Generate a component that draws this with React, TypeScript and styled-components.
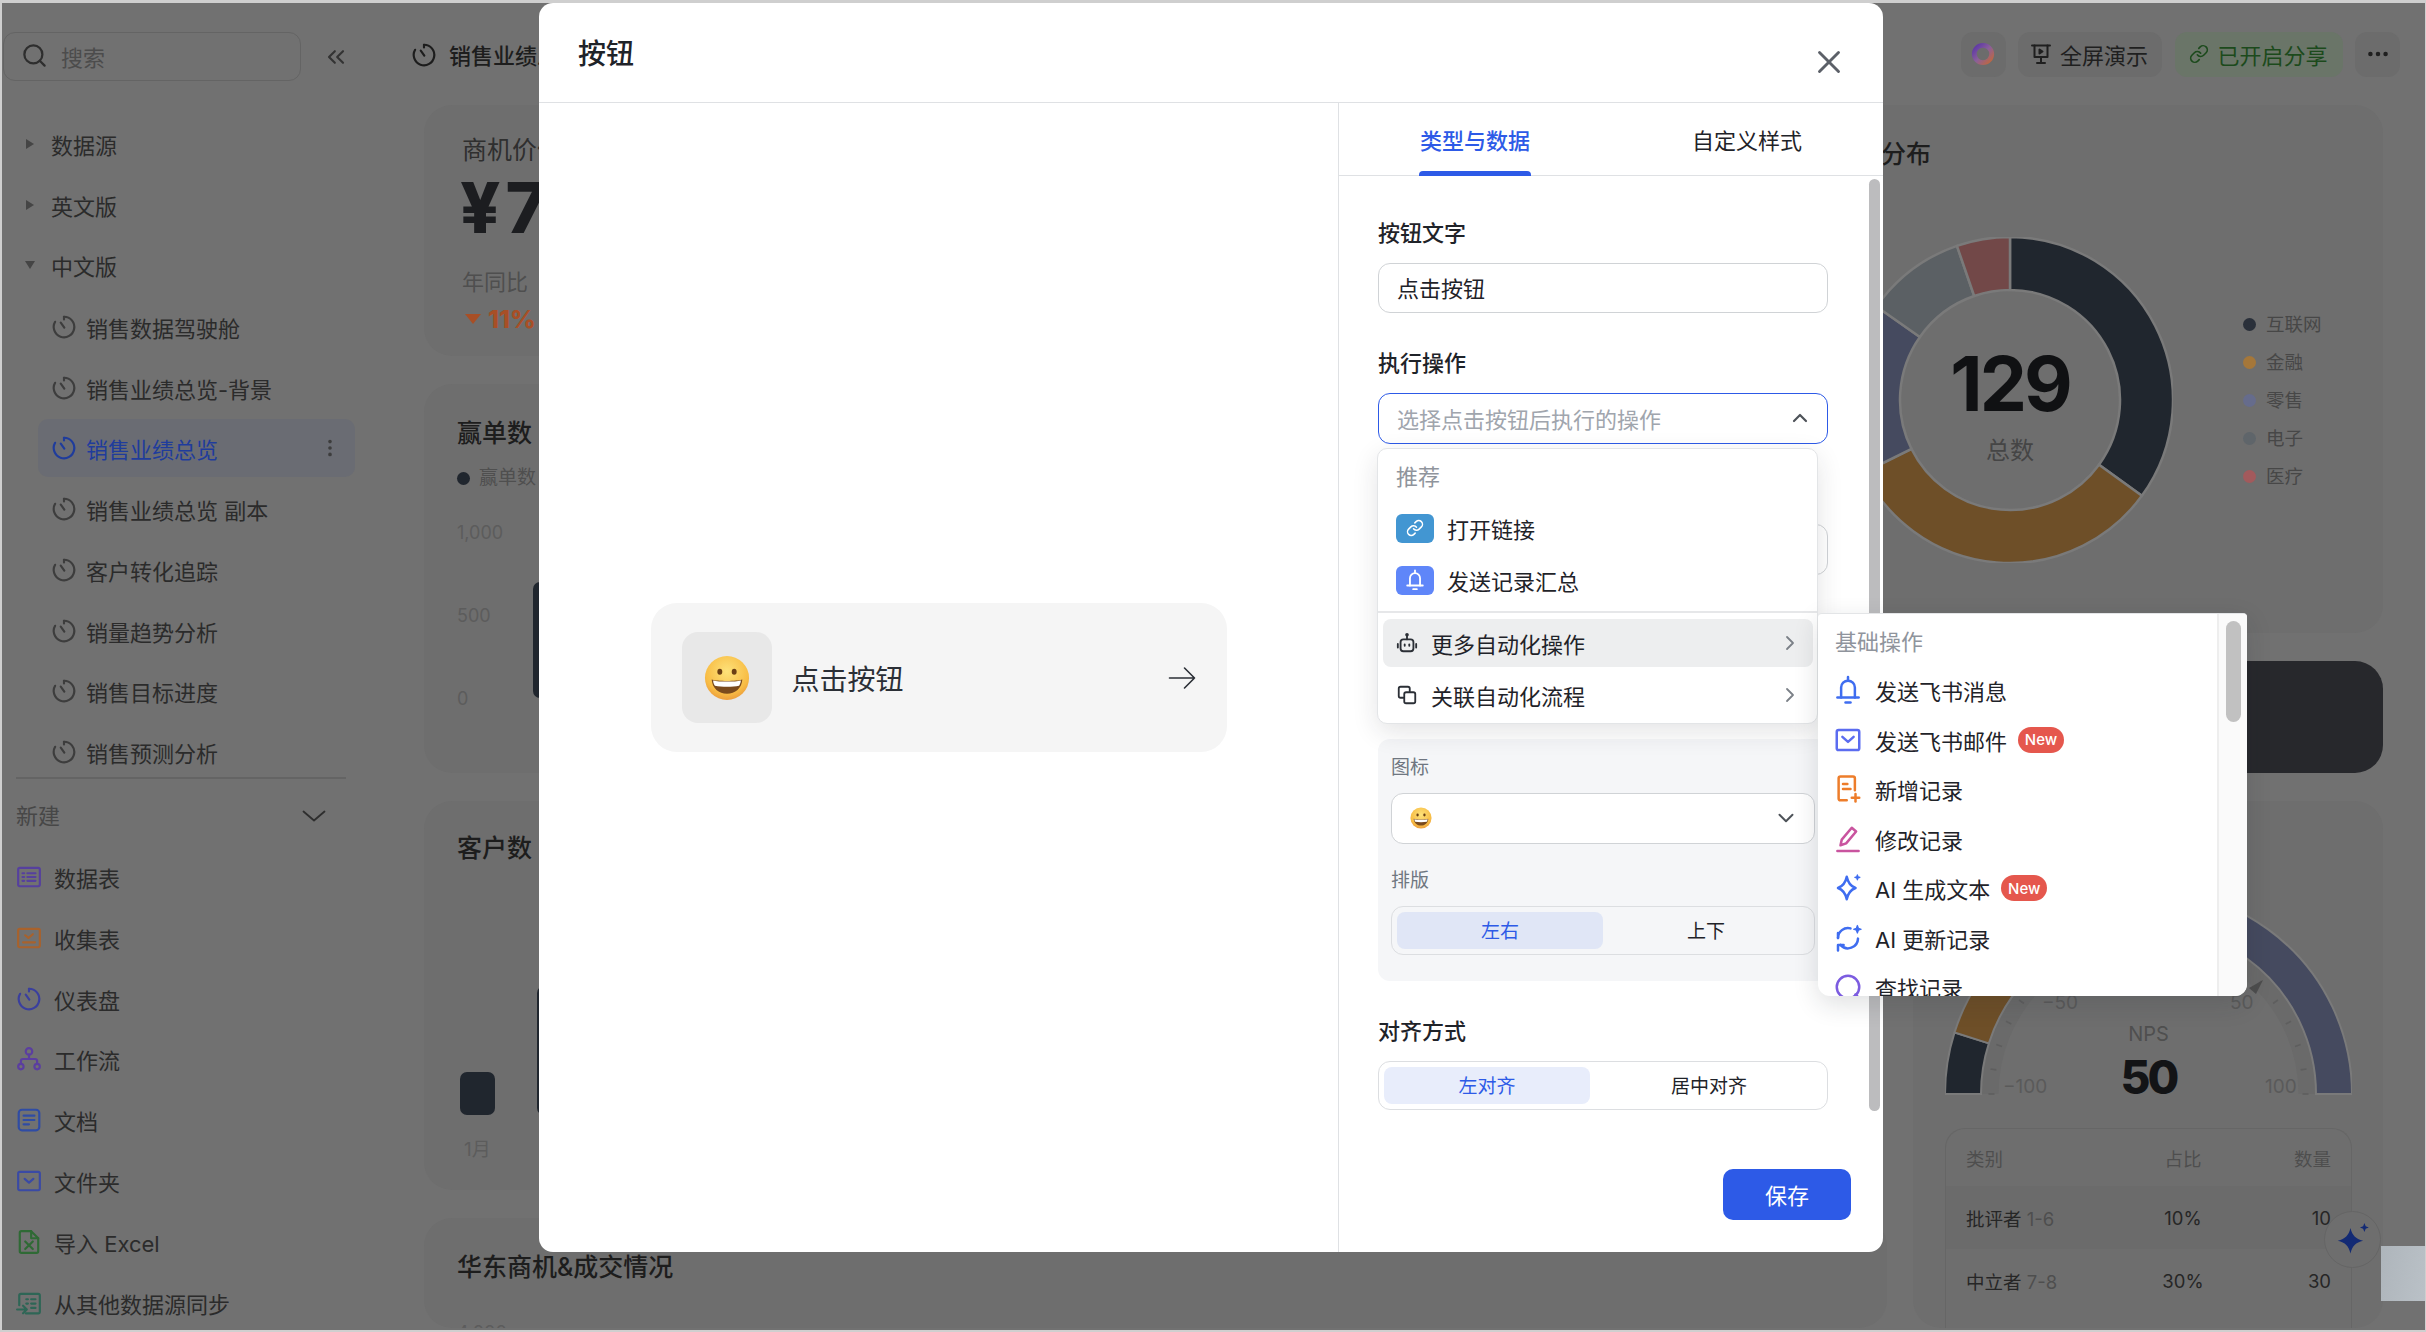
import React, {ReactElement, ReactNode} from "react";
import styled, {createGlobalStyle} from "styled-components";
import {ChevronDown, ChevronRight, ChevronsLeft, ChevronUp, Link, MoreHorizontal, MoreVertical, Search, X} from "lucide-react";

const GlobalStyle = createGlobalStyle`
  html, body {
    margin: 0;
    padding: 0;
    background: #cfcfcf;
  }

  * {
    box-sizing: border-box;
  }

  body {
    font-family: Inter, "Noto Sans CJK SC", "Liberation Sans", sans-serif;
    color: #1f2329;
  }
`;

const BLUE = "#2d5ae7";

/* ---------- page behind the dialog ---------- */

const Frame = styled.div`
  position: relative;
  width: 2426px;
  height: 1332px;
  overflow: hidden;
  display: grid;
  grid-template-columns: 409px 1fr;
  background: #717171;
  border: solid #cfcfcf;
  border-width: 3px 1px 2px 2px;
`;

const Sidebar = styled.aside`
  display: flex;
  flex-direction: column;
  height: 1327px;
  overflow: hidden;
  padding-top: 29px;
`;

const SearchRow = styled.div`
  display: flex;
  align-items: center;
  padding-left: 1px;
  gap: 21px;
  color: #333333;
  flex: none;
`;

const SearchBox = styled.div`
  display: flex;
  align-items: center;
  gap: 13px;
  width: 298px;
  height: 49px;
  padding: 0 0 2px 17px;
  border: 1px solid #646464;
  border-radius: 12px;
  font-size: 22px;
  color: #4c4c4c;

  svg {
    color: #2e2e2e;
  }
`;

const TreeClip = styled.div`
  margin-top: 14px;
  height: 682px;
  overflow: hidden;
  flex: none;
`;

const Tree = styled.div`
  display: flex;
  flex-direction: column;
  margin-top: -41px;
`;

const RootRow = styled.div`
  display: flex;
  align-items: center;
  height: 58px;
  margin: 1.35px 0;
  padding: 0 0 2px 22px;
  font-size: 22px;
  color: #2b2b2b;
`;

const ClippedRootRow = styled(RootRow)`
  margin: -1.65px 0 4.35px;
`;

const CaretBox = styled.span`
  display: flex;
  width: 27px;
`;

const ChildRow = styled.div<{ $active?: boolean }>`
  display: flex;
  align-items: center;
  gap: 9px;
  width: 317px;
  height: 58px;
  margin: 1.35px 0 1.35px 36px;
  padding: 0 14px 0 13px;
  border-radius: 10px;
  font-size: 22px;
  color: ${p => p.$active ? "#1f3c9c" : "#2b2b2b"};
  background: ${p => p.$active ? "#6a6c73" : "transparent"};

  svg:last-child:not(:first-child) {
    margin-left: auto;
    color: #3d3d3d;
  }
`;

const SideDivider = styled.div`
  flex: none;
  width: 330px;
  height: 2px;
  margin-left: 14px;
  background: #646464;
`;

const NewHeader = styled.div`
  display: flex;
  align-items: center;
  justify-content: space-between;
  flex: none;
  width: 324px;
  height: 67.6px;
  padding: 5px 0 2px 14px;
  font-size: 22px;
  color: #474747;

  svg {
    margin-top: 3px;
  }
`;

const NewRow = styled.div`
  display: flex;
  align-items: center;
  flex: none;
  gap: 12px;
  height: 60.8px;
  padding-left: 14px;
  font-size: 22px;
  color: #2b2b2b;
`;

const Main = styled.main`
  display: flex;
  flex-direction: column;
  padding-top: 29px;
  min-width: 0;
`;

const TopBar = styled.header`
  display: flex;
  align-items: center;
  height: 45px;
  gap: 12px;
  padding-right: 25px;
  color: #1d1d1d;
`;

const PageTitle = styled.h1`
  margin: 0 0 2px;
  font-size: 22px;
  font-weight: 500;
`;

const TopActions = styled.div`
  display: flex;
  gap: 12.5px;
  margin-left: auto;
`;

const TopButton = styled.div<{ $green?: boolean; $width: number; $gap?: number; $inset?: number }>`
  display: flex;
  align-items: center;
  justify-content: ${p => p.$inset ? "flex-start" : "center"};
  gap: ${p => p.$gap || 0}px;
  width: ${p => p.$width}px;
  height: 45px;
  padding: 0 0 2px ${p => p.$inset || 0}px;
  border-radius: 12px;
  font-size: 22px;
  background: ${p => p.$green ? "#6a7568" : "#6c6c6c"};
  color: ${p => p.$green ? "#1c4a1c" : "#1f1f1f"};
`;

const Board = styled.div`
  display: grid;
  grid-template-columns: 1298px 139px 470px;
  grid-template-rows: 251px 249px 112px 389px 110px;
  gap: 28px 26px;
  margin: 28px 0 0 13px;
`;

const Card = styled.section<{ $column: string; $row: string }>`
  grid-column: ${p => p.$column};
  grid-row: ${p => p.$row};
  display: flex;
  flex-direction: column;
  overflow: hidden;
  border-radius: 28px;
  padding: 30px 33px 0;
  background: #6e6e6e;
`;

const CardTitle = styled.h2<{ $drop?: number }>`
  margin: ${p => p.$drop || 0}px 0 0;
  font-size: 25px;
  line-height: 34px;
  font-weight: 500;
  color: #1d1d1d;
  white-space: nowrap;
`;

const KpiLabel = styled.div`
  padding-left: 5px;
  font-size: 25px;
  line-height: 30px;
  color: #2f2f2f;
`;

const KpiValue = styled.div`
  margin-top: 7px;
  padding-left: 3px;
  font-size: 70px;
  line-height: 72px;
  font-weight: 800;
  letter-spacing: 5px;
  color: #1c1d20;
  white-space: nowrap;
`;

const KpiNote = styled.div`
  margin-top: 23px;
  padding-left: 5px;
  font-size: 22px;
  line-height: 30px;
  color: #4f4f4f;
`;

const KpiTrend = styled.div`
  display: flex;
  align-items: center;
  gap: 7px;
  margin-top: 7px;
  padding-left: 8px;
  font-size: 25px;
  line-height: 30px;
  font-weight: 800;
  color: #a84f26;
`;

const DownMark = styled.span`
  width: 0;
  height: 0;
  border: solid transparent;
  border-width: 10px 8px 0;
  border-top-color: #a84f26;
`;

const SeriesLegend = styled.div`
  display: flex;
  align-items: center;
  gap: 9px;
  margin-top: 15px;
  font-size: 19px;
  line-height: 26px;
  color: #4f4f4f;
`;

const Dot = styled.span<{ $color: string }>`
  flex: none;
  width: 13px;
  height: 13px;
  border-radius: 50%;
  background: ${p => p.$color};
`;

const WinChart = styled.div`
  display: flex;
  height: 190px;
  margin-top: 30px;
`;

const YAxis = styled.div`
  display: flex;
  flex-direction: column;
  justify-content: space-between;
  width: 76px;
  font-size: 18px;
  line-height: 24px;
  color: #5c5c5c;
`;

const Bar = styled.div<{ $height: number; $width: number }>`
  flex: none;
  width: ${p => p.$width}px;
  height: ${p => p.$height}px;
  border-radius: 7px;
  background: #20262e;
`;

const WinBar = styled(Bar)`
  align-self: flex-end;
  margin-bottom: 13px;
`;

const CustomerBars = styled.div`
  display: flex;
  align-items: flex-end;
  gap: 42px;
  height: 250px;
  padding-left: 3px;
`;

const MonthLabel = styled.div`
  margin-top: 23px;
  padding-left: 7px;
  font-size: 19px;
  line-height: 24px;
  color: #5c5c5c;
`;

const ClippedAxis = styled.div`
  margin-top: 37px;
  font-size: 18px;
  line-height: 24px;
  color: #5c5c5c;
`;

const PieCard = styled(Card)`
  padding-top: 32px;
`;

const PieBody = styled.div`
  display: flex;
  align-items: center;
  gap: 70px;
  margin: 66px 0 0 66px;
`;

const PieCenter = styled.div`
  position: relative;
  flex: none;
  width: 326px;
  height: 326px;
`;

const PieCaption = styled.div`
  position: absolute;
  inset: 0;
  display: flex;
  flex-direction: column;
  align-items: center;
  padding-top: 105px;
`;

const PieTotal = styled.div`
  font-size: 75px;
  line-height: 84px;
  font-weight: 700;
  letter-spacing: -3px;
  color: #101113;
`;

const PieTotalLabel = styled.div`
  margin-top: 8px;
  font-size: 24px;
  line-height: 34px;
  color: #454545;
`;

const PieLegend = styled.div`
  display: flex;
  flex-direction: column;
  gap: 12px;
`;

const PieLegendItem = styled.div`
  display: flex;
  align-items: center;
  gap: 10px;
  font-size: 18.5px;
  line-height: 26px;
  color: #474747;
`;

const DarkBanner = styled.div`
  grid-column: 2 / 4;
  grid-row: 3;
  border-radius: 28px;
  background: #27282c;
`;

const NpsCard = styled(Card)`
  padding: 89px 31px 0 32px;
  flex-shrink: 0;
`;

const NpsTable = styled.div`
  flex: 1;
  margin-top: 33px;
  border: 1px solid #666666;
  border-bottom: 0;
  border-radius: 20px 20px 0 0;
  overflow: hidden;
`;

const NpsRow = styled.div<{ $head?: boolean; $shade?: boolean }>`
  display: grid;
  grid-template-columns: 167px 100px 98px;
  align-items: center;
  height: ${p => p.$head ? "57px" : "63px"};
  padding: 0 20px;
  font-size: 18.5px;
  color: ${p => p.$head ? "#4e4e4e" : "#262626"};
  background: ${p => p.$shade ? "#6b6b6b" : "transparent"};

  span:nth-child(2) {
    text-align: center;
  }

  span:nth-child(3) {
    text-align: right;
  }

  em {
    font-style: normal;
    color: #4e4e4e;
  }
`;

const Fab = styled.div`
  position: absolute;
  right: 44px;
  bottom: 62px;
  z-index: 1;
  display: flex;
  align-items: center;
  justify-content: center;
  width: 57px;
  height: 57px;
  border-radius: 50%;
  border: 1px solid #656565;
  background: #6e6e6e;
`;

const CornerPatch = styled.div`
  position: absolute;
  right: 0;
  bottom: 29px;
  width: 44px;
  height: 55px;
  background: linear-gradient(100deg, #aeb5bb, #bac1c7);
`;

/* ---------- dialog ---------- */

const Dialog = styled.div`
  position: absolute;
  top: 0;
  left: 537px;
  z-index: 2;
  width: 1344px;
  height: 1249px;
  display: grid;
  grid-template-rows: 100px 1fr;
  background: #ffffff;
  border-radius: 14px;
`;

const DialogHead = styled.div`
  display: flex;
  align-items: center;
  justify-content: space-between;
  padding: 0 39px;
  border-bottom: 1px solid #dfe1e4;
  color: #5c6068;
`;

const DialogTitle = styled.div`
  margin-top: -2px;
  font-size: 28px;
  font-weight: 500;
  color: #1f2329;
`;

const CloseButton = styled.span`
  display: flex;
  margin: 18px -4px 0 0;
`;

const DialogBody = styled.div`
  display: grid;
  grid-template-columns: 799px 1fr;
  min-height: 0;
`;

const Preview = styled.div`
  display: flex;
  align-items: center;
  justify-content: center;
`;

const DemoButton = styled.div`
  display: flex;
  align-items: center;
  width: 576px;
  height: 149px;
  padding: 0 31px 0 31px;
  border-radius: 26px;
  background: #f5f5f5;
  font-size: 28px;
  color: #2b2f36;
`;

const EmojiTile = styled.div`
  display: flex;
  align-items: center;
  justify-content: center;
  width: 90px;
  height: 91px;
  margin-right: 20px;
  border-radius: 16px;
  background: #e8e8e8;
`;

const DemoArrow = styled.svg`
  flex: none;
  margin-left: auto;
`;

const SidePanel = styled.div`
  display: flex;
  flex-direction: column;
  position: relative;
  min-height: 0;
  border-left: 1px solid #dfe1e4;
`;

const Tabs = styled.div`
  display: grid;
  grid-template-columns: 1fr 1fr;
  height: 73px;
  border-bottom: 1px solid #dfe1e4;
`;

const Tab = styled.div`
  display: flex;
  justify-content: center;
`;

const TabLabel = styled.div<{ $active?: boolean }>`
  position: relative;
  display: flex;
  align-items: center;
  height: 73px;
  padding: 0 1px 2px;
  font-size: 22px;
  font-weight: ${p => p.$active ? 500 : 400};
  color: ${p => p.$active ? BLUE : "#1f2329"};

  &::after {
    content: "";
    position: absolute;
    left: 0;
    right: 0;
    bottom: 0;
    height: 5px;
    border-radius: 4px 4px 0 0;
    background: ${p => p.$active ? BLUE : "transparent"};
  }
`;

const FormArea = styled.div`
  position: relative;
  flex: 1;
  display: flex;
  flex-direction: column;
  width: 489px;
  padding: 42px 0 0 39px;
  min-height: 0;
`;

const Scrollbar = styled.div`
  position: absolute;
  top: 76px;
  right: 3px;
  width: 11px;
  height: 932px;
  border-radius: 6px;
  background: #bcbcbe;
`;

const FieldLabel = styled.div<{ $gap?: number }>`
  margin-top: ${p => p.$gap || 0}px;
  margin-bottom: 15px;
  font-size: 22px;
  line-height: 30px;
  font-weight: 500;
  color: #1f2329;
`;

const TextBox = styled.div<{ $focus?: boolean; $height?: number }>`
  display: flex;
  align-items: center;
  justify-content: space-between;
  flex: none;
  height: ${p => p.$height || 50}px;
  padding: 0 15px 2px 18px;
  border: 1px solid ${p => p.$focus ? BLUE : "#d0d3d6"};
  border-radius: 12px;
  background: #ffffff;
  font-size: 22px;
  color: ${p => p.$focus ? "#a0a5ad" : "#1f2329"};

  svg {
    color: #4e5359;
  }
`;

const SelectAnchor = styled.div`
  position: relative;
  z-index: 2;
`;

const HiddenField = styled(TextBox)`
  margin-top: 80px;
`;

const SubSettings = styled.div`
  flex: none;
  height: 242px;
  margin-top: 164px;
  padding: 15px 13px 0;
  border-radius: 12px;
  background: #f5f6f8;
`;

const SubLabel = styled.div<{ $gap?: number }>`
  margin-top: ${p => p.$gap || 0}px;
  margin-bottom: 11px;
  font-size: 19px;
  line-height: 28px;
  color: #6f7680;
`;

const Segments = styled.div<{ $columns?: string }>`
  display: grid;
  grid-template-columns: ${p => p.$columns || "1fr 1fr"};
  height: 49px;
  padding: 5px;
  border: 1px solid #dcdee1;
  border-radius: 12px;
`;

const Segment = styled.div<{ $active?: boolean; $tint?: string; $shift?: number }>`
  display: flex;
  align-items: center;
  justify-content: center;
  padding: 0 0 2px ${p => p.$shift || 0}px;
  border-radius: 8px;
  font-size: 19px;
  color: ${p => p.$active ? BLUE : "#1f2329"};
  background: ${p => p.$active ? (p.$tint || "#e8edfb") : "transparent"};
`;

const PanelFooter = styled.div`
  flex: none;
  display: flex;
  justify-content: flex-end;
  height: 112px;
  padding: 29px 32px 0 0;
`;

const SaveButton = styled.div`
  display: flex;
  align-items: center;
  justify-content: center;
  width: 128px;
  height: 51px;
  padding-bottom: 2px;
  border-radius: 10px;
  background: ${BLUE};
  color: #ffffff;
  font-size: 22px;
`;

const Dropdown = styled.div`
  position: absolute;
  top: 55px;
  left: -1px;
  width: 441px;
  height: 276px;
  background: #ffffff;
  border: 1px solid #e3e5e7;
  border-radius: 10px;
  box-shadow: 0 8px 26px rgba(31, 35, 41, .12);
  font-size: 22px;
`;

const Recommended = styled.div`
  height: 164px;
  padding: 13px 0 0 18px;
  border-bottom: 2px solid #e6e7e9;
`;

const MenuHeading = styled.div<{ $gap: number }>`
  margin-bottom: ${p => p.$gap}px;
  font-size: 22px;
  line-height: 30px;
  color: #8f949c;
`;

const QuickRow = styled.div`
  display: flex;
  align-items: center;
  gap: 13px;
  height: 52px;
  color: #1f2329;
`;

const QuickIcon = styled.span<{ $color: string }>`
  display: flex;
  align-items: center;
  justify-content: center;
  width: 38px;
  height: 29px;
  border-radius: 6px;
  background: ${p => p.$color};
  color: #ffffff;
`;

const MoreList = styled.div`
  display: flex;
  flex-direction: column;
  gap: 4px;
  padding: 6px 4px 0 5px;
`;

const MoreRow = styled.div<{ $active?: boolean }>`
  display: flex;
  align-items: center;
  gap: 13px;
  height: 48px;
  padding: 0 11px 0 13px;
  border-radius: 8px;
  color: #1f2329;
  background: ${p => p.$active ? "#edeeef" : "transparent"};

  svg:last-child {
    margin-left: auto;
    color: #7b8087;
  }
`;

const SubMenu = styled.div`
  position: absolute;
  top: 164px;
  left: 440px;
  width: 429px;
  height: 383px;
  display: flex;
  overflow: hidden;
  background: #ffffff;
  border-radius: 4px 4px 12px 12px;
  box-shadow: 0 8px 26px rgba(31, 35, 41, .14);
  border-top: 1px solid #e3e5e7;
`;

const SubList = styled.div`
  flex: 1;
  overflow: hidden;
  padding: 13px 0 0 17px;
`;

const SubRow = styled.div`
  display: flex;
  align-items: center;
  height: 49.5px;
  color: #1f2329;
`;

const SubIcon = styled.span`
  display: flex;
  width: 40px;

  svg {
    margin-left: -2px;
  }
`;

const NewBadge = styled.span`
  display: flex;
  align-items: center;
  justify-content: center;
  width: 46px;
  height: 26px;
  margin-left: 11px;
  border-radius: 13px;
  background: #e5574d;
  color: #ffffff;
  font-size: 15px;
  font-weight: 500;
`;

const SubGutter = styled.div`
  flex: none;
  width: 30px;
  padding: 7px 6px 0 7px;
  background: #fafafa;
  border-left: 2px solid #eeeeee;
`;

const SubThumb = styled.div`
  height: 101px;
  border-radius: 8px;
  background: #c1c1c1;
`;

/* ---------- drawings ---------- */

function Svg({size, color, children}: { size: number, color: string, children: ReactNode }): ReactElement {
    return (
        <svg width={size} height={size} viewBox="0 0 24 24" fill="none" stroke={color} strokeWidth={2}
             strokeLinecap="round" strokeLinejoin="round" style={{flex: "none"}}>
            {children}
        </svg>
    );
}

function DashIcon({size = 26, color = "#3d3d3d"}: { size?: number, color?: string }) {
    return (
        <Svg size={size} color={color}>
            <path d="M12 2.5a9.5 9.5 0 1 1-8.2 4.7"/>
            <path d="M12 2.5v2.5"/>
            <path d="M12.3 12.5 9 8"/>
        </Svg>
    );
}

function BellIcon({size, color}: { size: number, color: string }) {
    return (
        <Svg size={size} color={color}>
            <path d="M12 1.5v2"/>
            <path d="M6.5 18v-8a5.5 5.5 0 0 1 11 0v8"/>
            <path d="M3.5 18h17"/>
            <path d="M10 22h4"/>
        </Svg>
    );
}

function BotIcon() {
    return (
        <Svg size={22} color="#2b2f36">
            <rect x="5" y="8" width="14" height="13" rx="3"/>
            <path d="M12 4v4"/>
            <path d="M2 13v4"/>
            <path d="M22 13v4"/>
            <circle cx="12" cy="3" r="1"/>
            <path d="M9.5 13.5v1.5"/>
            <path d="M14.5 13.5v1.5"/>
        </Svg>
    );
}

function FlowLinkIcon() {
    return (
        <Svg size={22} color="#2b2f36">
            <path d="M15 8V5a2 2 0 0 0-2-2H5a2 2 0 0 0-2 2v8a2 2 0 0 0 2 2h3"/>
            <rect x="9" y="9" width="12" height="12" rx="2"/>
        </Svg>
    );
}

function MailIcon() {
    return (
        <Svg size={30} color="#5b6cf0">
            <rect x="3" y="4" width="18" height="16" rx="1.5"/>
            <path d="M7.5 9.5 12 13.5l4.5-4"/>
        </Svg>
    );
}

function AddRecordIcon() {
    return (
        <Svg size={30} color="#ed7d2b">
            <path d="M11 21H6a1.5 1.500 0 0 1-1.500-1.500v-16A1.500 1.500 0 0 1 6 2h10a1.500 1.500 0 0 1 1.500 1.500V13"/>
            <path d="M8 8h3.500"/>
            <path d="M8 12h6"/>
            <path d="M18 16v6"/>
            <path d="M15 19h6"/>
        </Svg>
    );
}

function EditRecordIcon() {
    return (
        <Svg size={30} color="#c9549f">
            <path d="m6 17 1-4.500 8-9.500 3.500 3-8 9.500z"/>
            <path d="M3.500 21.500h17"/>
        </Svg>
    );
}

function AiTextIcon() {
    return (
        <Svg size={30} color="#3f6df0">
            <path d="M11 3c1 5 3 7.500 7 9-4 1.500-6 4-7 9-1-5-3-7.500-7-9 4-1.500 6-4 7-9z"/>
            <path d="m19.500 1.500.5 1.500 1.500.5-1.500.5-.5 1.500-.5-1.500-1.500-.5 1.500-.5z" fill="#3f6df0" strokeWidth={1}/>
        </Svg>
    );
}

function AiUpdateIcon() {
    return (
        <Svg size={30} color="#3f6df0">
            <path d="M4 12a8 8 0 0 1 10-7.700"/>
            <path d="M20 12.500a8 8 0 0 1-14 5"/>
            <path d="M4 22v-4.500h4.500"/>
            <path d="M4 12V8"/>
            <path d="m19.500 2 .8 2.200 2.200.8-2.200.8-.8 2.200-.8-2.200-2.200-.8 2.200-.8z" fill="#3f6df0" strokeWidth={1}/>
        </Svg>
    );
}

function FindIcon() {
    return (
        <Svg size={30} color="#7c5ce0">
            <circle cx="12" cy="12" r="9"/>
            <path d="m18 18 3 3"/>
        </Svg>
    );
}

function SheetIcon() {
    return (
        <Svg size={26} color="#56409e">
            <rect x="2" y="3.500" width="20" height="17" rx="1.500"/>
            <path d="M6 8.500h1.500M6 12h1.500M6 15.500h1.500M10.500 8.500H18M10.500 12H18M10.500 15.500H18"/>
        </Svg>
    );
}

function FormIcon() {
    return (
        <Svg size={26} color="#a8622c">
            <rect x="2" y="3.500" width="20" height="17" rx="1.500"/>
            <path d="m8.500 9.500 3 2.500 4-3.500"/>
            <path d="M6.500 16h11"/>
        </Svg>
    );
}

function FlowIcon() {
    return (
        <Svg size={26} color="#5b3ea0">
            <circle cx="12" cy="5" r="3"/>
            <circle cx="4.500" cy="19" r="2.500"/>
            <circle cx="19.500" cy="19" r="2.500"/>
            <path d="M12 8v4M4.500 16.500V14a2 2 0 0 1 2-2h11a2 2 0 0 1 2 2v2.500"/>
        </Svg>
    );
}

function DocIcon() {
    return (
        <Svg size={26} color="#2f4ca5">
            <rect x="2.500" y="2.500" width="19" height="19" rx="3"/>
            <path d="M7 8h10M7 12h10M7 16h5"/>
        </Svg>
    );
}

function FolderIcon() {
    return (
        <Svg size={26} color="#3a4aa5">
            <rect x="2" y="3.500" width="20" height="17" rx="1.500"/>
            <path d="m8 10 4 3.500 4-3.500"/>
        </Svg>
    );
}

function ExcelIcon() {
    return (
        <Svg size={26} color="#2f6a35">
            <path d="M14 2H5a1.500 1.500 0 0 0-1.500 1.500v17A1.500 1.500 0 0 0 5 22h14a1.500 1.500 0 0 0 1.500-1.500V8.500z"/>
            <path d="M14 2v6.500h6.500"/>
            <path d="m8.500 11.500 7 7M15.500 11.500l-7 7"/>
        </Svg>
    );
}

function SyncIcon() {
    return (
        <Svg size={26} color="#2e6656">
            <path d="M3 14V5a1.500 1.500 0 0 1 1.500-1.500h16A1.500 1.500 0 0 1 22 5v15a1.500 1.500 0 0 1-1.500 1.500H9"/>
            <path d="M9.500 8.500h1.500M9.500 12.500h1.500M14 8.500h4M14 12.500h4M14 16.500h4"/>
            <path d="M1 18h9M6.500 14.500 10 18l-3.500 3.500"/>
        </Svg>
    );
}

function ScreenIcon() {
    return (
        <Svg size={24} color="#1f1f1f">
            <path d="M3 3.500h18"/>
            <path d="M5.500 3.500V15h13V3.500"/>
            <path d="M12 15v6"/>
            <path d="M8 21h8"/>
            <path d="M10.500 7.500v4l3-2z" fill="#1f1f1f"/>
        </Svg>
    );
}

function RingLogo() {
    return (
        <svg width="26" height="26" viewBox="0 0 24 24" style={{flex: "none"}}>
            <defs>
                <linearGradient id="ring" x1="0" y1="0" x2="1" y2="1">
                    <stop offset="0" stopColor="#5a34a8"/>
                    <stop offset=".5" stopColor="#8a5f9a"/>
                    <stop offset="1" stopColor="#c2683a"/>
                </linearGradient>
            </defs>
            <circle cx="12" cy="12" r="8" fill="none" stroke="url(#ring)" strokeWidth={4.5}/>
        </svg>
    );
}

function WideChevron() {
    return (
        <svg width="24" height="12" viewBox="0 0 24 12" fill="none" stroke="#2e2e2e" strokeWidth={1.8} strokeLinecap="round" strokeLinejoin="round" style={{flex: "none"}}>
            <path d="m1.500 1.500 10.500 9 10.500-9"/>
        </svg>
    );
}

function GrinEmoji({size}: { size: number }) {
    return (
        <svg width={size} height={size} viewBox="0 0 48 48" style={{flex: "none"}}>
            <defs>
                <radialGradient id="face" cx=".5" cy=".35" r=".7">
                    <stop offset="0" stopColor="#fde27a"/>
                    <stop offset=".7" stopColor="#f8bd45"/>
                    <stop offset="1" stopColor="#e8943a"/>
                </radialGradient>
            </defs>
            <circle cx="24" cy="24" r="23" fill="url(#face)"/>
            <ellipse cx="16.500" cy="17.500" rx="2.600" ry="3.200" fill="#6b3f14"/>
            <ellipse cx="31.500" cy="17.500" rx="2.600" ry="3.200" fill="#6b3f14"/>
            <path d="M8 25.500c5 2 27 2 32 0-.5 9-7.500 15-16 15S8.500 34.500 8 25.500z" fill="#7a4a1d"/>
            <path d="M9.500 26.500c6 1.700 23 1.700 29 0-.3 2.500-1 4.300-1.900 5.500-7 1.400-18 1.400-25.200 0-1-1.200-1.700-3-1.900-5.500z" fill="#ffffff"/>
        </svg>
    );
}

function Sparkle() {
    return (
        <svg width="38" height="33" viewBox="0 0 30 26" style={{flex: "none"}}>
            <path d="M13 4c1.500 6 4 8.500 10 10-6 1.500-8.500 4-10 10-1.500-6-4-8.500-10-10 6-1.500 8.500-4 10-10z" fill="#132a74"/>
            <path d="m24 0 1 2.500 2.500 1-2.500 1-1 2.500-1-2.500-2.500-1 2.500-1z" fill="#132a74"/>
        </svg>
    );
}

function ringSlice(cx: number, cy: number, inner: number, outer: number, from: number, to: number): string {
    const point = (r: number, deg: number) => {
        const rad = deg * Math.PI / 180;
        return `${(cx + r * Math.sin(rad)).toFixed(2)} ${(cy - r * Math.cos(rad)).toFixed(2)}`;
    };
    const large = to - from > 180 ? 1 : 0;
    return `M${point(outer, from)}A${outer} ${outer} 0 ${large} 1 ${point(outer, to)}L${point(inner, to)}A${inner} ${inner} 0 ${large} 0 ${point(inner, from)}Z`;
}

const pieSlices = [
    {from: 0, to: 126, color: "#20262e", legend: "#2a303a", name: "互联网"},
    {from: 126, to: 243.6, color: "#6e4f28", legend: "#a5773a", name: "金融"},
    {from: 243.6, to: 305, color: "#454a5f", legend: "#666c8c", name: "零售"},
    {from: 305, to: 341, color: "#5b6064", legend: "#5f656a", name: "电子"},
    {from: 341, to: 360, color: "#724848", legend: "#a35a5c", name: "医疗"},
];

function Donut() {
    return (
        <svg width="326" height="326" viewBox="0 0 326 326">
            {pieSlices.map(s => (
                <path key={s.name} d={ringSlice(163, 163, 110, 163, s.from, s.to)} fill={s.color} stroke="#7a7a7a" strokeWidth={2.5}/>
            ))}
        </svg>
    );
}

function Gauge() {
    const ticks = [];
    for (let deg = -90; deg <= 90; deg += 9) {
        ticks.push(<path key={deg} d={ringSlice(203.5, 204, 154, 160, deg - 0.3, deg + 0.3)} fill="#5e5e5e"/>);
    }
    return (
        <svg width="407" height="205" viewBox="0 0 407 205" style={{display: "block", flex: "none"}}>
            <path d={ringSlice(203.5, 204, 150, 167, 270, 450)} fill="#6a6a6a"/>
            {ticks}
            <path d={ringSlice(203.5, 204, 167.500, 203.500, 270, 287.600)} fill="#20262e" stroke="#7a7a7a" strokeWidth={2}/>
            <path d={ringSlice(203.5, 204, 167.500, 203.500, 287.600, 342)} fill="#6e4f28" stroke="#7a7a7a" strokeWidth={2}/>
            <path d={ringSlice(203.5, 204, 167.500, 203.500, 342, 450)} fill="#454a5f" stroke="#7a7a7a" strokeWidth={2}/>
            <polygon points="318,90 304,98 311,104" fill="#4d4d4d"/>
            <text x="58" y="203" fontSize="19" fill="#5a5a5a">−100</text>
            <text x="320" y="203" fontSize="19" fill="#5a5a5a">100</text>
            <text x="97" y="119" fontSize="19" fill="#5a5a5a">−50</text>
            <text x="285" y="119" fontSize="19" fill="#5a5a5a">50</text>
            <text x="203.500" y="151" fontSize="20" textAnchor="middle" fill="#4f4f4f">NPS</text>
            <text x="203.500" y="204" fontSize="46" fontWeight="800" letterSpacing="-3" textAnchor="middle" fill="#131416">50</text>
        </svg>
    );
}

/* ---------- data ---------- */

const roots = ["数据源", "英文版", "中文版"];

const dashboards = ["销售数据驾驶舱", "销售业绩总览-背景", "销售业绩总览", "销售业绩总览 副本", "客户转化追踪", "销量趋势分析", "销售目标进度", "销售预测分析"];

const creators = [
    {name: "数据表", icon: <SheetIcon/>},
    {name: "收集表", icon: <FormIcon/>},
    {name: "仪表盘", icon: <DashIcon color="#3a3f9e"/>},
    {name: "工作流", icon: <FlowIcon/>},
    {name: "文档", icon: <DocIcon/>},
    {name: "文件夹", icon: <FolderIcon/>},
    {name: "导入 Excel", icon: <ExcelIcon/>},
    {name: "从其他数据源同步", icon: <SyncIcon/>},
];

const operations = [
    {name: "发送飞书消息", icon: <BellIcon size={30} color="#3f6df0"/>},
    {name: "发送飞书邮件", icon: <MailIcon/>, fresh: true},
    {name: "新增记录", icon: <AddRecordIcon/>},
    {name: "修改记录", icon: <EditRecordIcon/>},
    {name: "AI 生成文本", icon: <AiTextIcon/>, fresh: true},
    {name: "AI 更新记录", icon: <AiUpdateIcon/>},
    {name: "查找记录", icon: <FindIcon/>},
];

function Caret({open}: { open?: boolean }) {
    return (
        <svg width="12" height="12" viewBox="0 0 12 12" style={{transform: open ? "rotate(90deg)" : undefined}}>
            <path d="M2 1l8 5-8 5z" fill="#454545"/>
        </svg>
    );
}

function Page() {
    return (
        <>
            <Sidebar>
                <SearchRow>
                    <SearchBox><Search size={27} strokeWidth={2}/>搜索</SearchBox>
                    <ChevronsLeft size={28} strokeWidth={1.8}/>
                </SearchRow>
                <TreeClip>
                    <Tree>
                        <ClippedRootRow><CaretBox/>仪表盘模板示例</ClippedRootRow>
                        {roots.map((name, i) => (
                            <RootRow key={name}><CaretBox><Caret open={i === 2}/></CaretBox>{name}</RootRow>
                        ))}
                        {dashboards.map(name => {
                            const active = name === "销售业绩总览";
                            return (
                                <ChildRow key={name} $active={active}>
                                    <DashIcon color={active ? "#1f3c9c" : "#3d3d3d"}/>
                                    {name}
                                    {active && <MoreVertical size={22}/>}
                                </ChildRow>
                            );
                        })}
                    </Tree>
                </TreeClip>
                <SideDivider/>
                <NewHeader>新建<WideChevron/></NewHeader>
                {creators.map(c => (
                    <NewRow key={c.name}>{c.icon}{c.name}</NewRow>
                ))}
            </Sidebar>
            <Main>
                <TopBar>
                    <DashIcon color="#1d1d1d"/>
                    <PageTitle>销售业绩总览</PageTitle>
                    <TopActions>
                        <TopButton $width={45}><RingLogo/></TopButton>
                        <TopButton $width={144} $gap={7} $inset={11}><ScreenIcon/>全屏演示</TopButton>
                        <TopButton $green $width={168} $gap={9} $inset={14}><Link size={20} strokeWidth={2}/>已开启分享</TopButton>
                        <TopButton $width={45}><MoreHorizontal size={26} strokeWidth={2.2}/></TopButton>
                    </TopActions>
                </TopBar>
                <Board>
                    <Card $column="1" $row="1">
                        <KpiLabel>商机价值</KpiLabel>
                        <KpiValue>¥7,820</KpiValue>
                        <KpiNote>年同比</KpiNote>
                        <KpiTrend><DownMark/>11%</KpiTrend>
                    </Card>
                    <PieCard $column="2 / 4" $row="1 / 3">
                        <CardTitle>客户行业分布</CardTitle>
                        <PieBody>
                            <PieCenter>
                                <Donut/>
                                <PieCaption>
                                    <PieTotal>129</PieTotal>
                                    <PieTotalLabel>总数</PieTotalLabel>
                                </PieCaption>
                            </PieCenter>
                            <PieLegend>
                                {pieSlices.map(s => (
                                    <PieLegendItem key={s.name}><Dot $color={s.legend}/>{s.name}</PieLegendItem>
                                ))}
                            </PieLegend>
                        </PieBody>
                    </PieCard>
                    <Card $column="1" $row="2 / 4">
                        <CardTitle $drop={2}>赢单数</CardTitle>
                        <SeriesLegend><Dot $color="#20262e"/>赢单数</SeriesLegend>
                        <WinChart>
                            <YAxis><span>1,000</span><span>500</span><span>0</span></YAxis>
                            <WinBar $width={60} $height={116}/>
                        </WinChart>
                    </Card>
                    <DarkBanner/>
                    <Card $column="1" $row="4">
                        <CardTitle>客户数</CardTitle>
                        <CustomerBars>
                            <Bar $width={35} $height={43}/>
                            <Bar $width={35} $height={129}/>
                        </CustomerBars>
                        <MonthLabel>1月</MonthLabel>
                    </Card>
                    <NpsCard $column="3" $row="4 / 6">
                        <Gauge/>
                        <NpsTable>
                            <NpsRow $head><span>类别</span><span>占比</span><span>数量</span></NpsRow>
                            <NpsRow $shade><span>批评者 <em>1-6</em></span><span>10%</span><span>10</span></NpsRow>
                            <NpsRow><span>中立者 <em>7-8</em></span><span>30%</span><span>30</span></NpsRow>
                        </NpsTable>
                    </NpsCard>
                    <Card $column="1 / 3" $row="5">
                        <CardTitle $drop={2}>华东商机&amp;成交情况</CardTitle>
                        <ClippedAxis>4,000</ClippedAxis>
                    </Card>
                </Board>
            </Main>
            <CornerPatch/>
            <Fab><Sparkle/></Fab>
        </>
    );
}

function ActionMenu() {
    return (
        <Dropdown>
            <Recommended>
                <MenuHeading $gap={10}>推荐</MenuHeading>
                <QuickRow><QuickIcon $color="#4296d2"><Link size={18} strokeWidth={2}/></QuickIcon>打开链接</QuickRow>
                <QuickRow><QuickIcon $color="#5f86f9"><BellIcon size={22} color="#ffffff"/></QuickIcon>发送记录汇总</QuickRow>
            </Recommended>
            <MoreList>
                <MoreRow $active><BotIcon/>更多自动化操作<ChevronRight size={24} strokeWidth={1.8}/></MoreRow>
                <MoreRow><FlowLinkIcon/>关联自动化流程<ChevronRight size={24} strokeWidth={1.8}/></MoreRow>
            </MoreList>
            <SubMenu>
                <SubList>
                    <MenuHeading $gap={8.5}>基础操作</MenuHeading>
                    {operations.map(op => (
                        <SubRow key={op.name}>
                            <SubIcon>{op.icon}</SubIcon>
                            {op.name}
                            {op.fresh && <NewBadge>New</NewBadge>}
                        </SubRow>
                    ))}
                </SubList>
                <SubGutter><SubThumb/></SubGutter>
            </SubMenu>
        </Dropdown>
    );
}

function ButtonDialog() {
    return (
        <Dialog>
            <DialogHead>
                <DialogTitle>按钮</DialogTitle>
                <CloseButton><X size={38} strokeWidth={1.8}/></CloseButton>
            </DialogHead>
            <DialogBody>
                <Preview>
                    <DemoButton>
                        <EmojiTile><GrinEmoji size={46}/></EmojiTile>
                        点击按钮
                        <DemoArrow width="28" height="24" viewBox="0 0 28 24" fill="none" stroke="#2b2f36" strokeWidth={1.6} strokeLinecap="round" strokeLinejoin="round">
                            <path d="M1.500 12h25M16.500 2l10 10-10 10"/>
                        </DemoArrow>
                    </DemoButton>
                </Preview>
                <SidePanel>
                    <Tabs>
                        <Tab><TabLabel $active>类型与数据</TabLabel></Tab>
                        <Tab><TabLabel>自定义样式</TabLabel></Tab>
                    </Tabs>
                    <FormArea>
                        <FieldLabel>按钮文字</FieldLabel>
                        <TextBox>点击按钮</TextBox>
                        <FieldLabel $gap={35}>执行操作</FieldLabel>
                        <SelectAnchor>
                            <TextBox $focus $height={51}>
                                选择点击按钮后执行的操作
                                <ChevronUp size={24} strokeWidth={2.2}/>
                            </TextBox>
                            <ActionMenu/>
                        </SelectAnchor>
                        <HiddenField $height={51}/>
                        <SubSettings>
                            <SubLabel>图标</SubLabel>
                            <TextBox $height={51}><GrinEmoji size={22}/><ChevronDown size={26} strokeWidth={1.8}/></TextBox>
                            <SubLabel $gap={23}>排版</SubLabel>
                            <Segments>
                                <Segment $active $tint="#e0e6f6">左右</Segment>
                                <Segment>上下</Segment>
                            </Segments>
                        </SubSettings>
                        <FieldLabel $gap={35}>对齐方式</FieldLabel>
                        <Segments $columns="206px 1fr">
                            <Segment $active>左对齐</Segment>
                            <Segment $shift={6}>居中对齐</Segment>
                        </Segments>
                    </FormArea>
                    <Scrollbar/>
                    <PanelFooter><SaveButton>保存</SaveButton></PanelFooter>
                </SidePanel>
            </DialogBody>
        </Dialog>
    );
}

export default function App(): ReactElement {
    return (
        <>
            <GlobalStyle/>
            <Frame>
                <Page/>
                <ButtonDialog/>
            </Frame>
        </>
    );
}
